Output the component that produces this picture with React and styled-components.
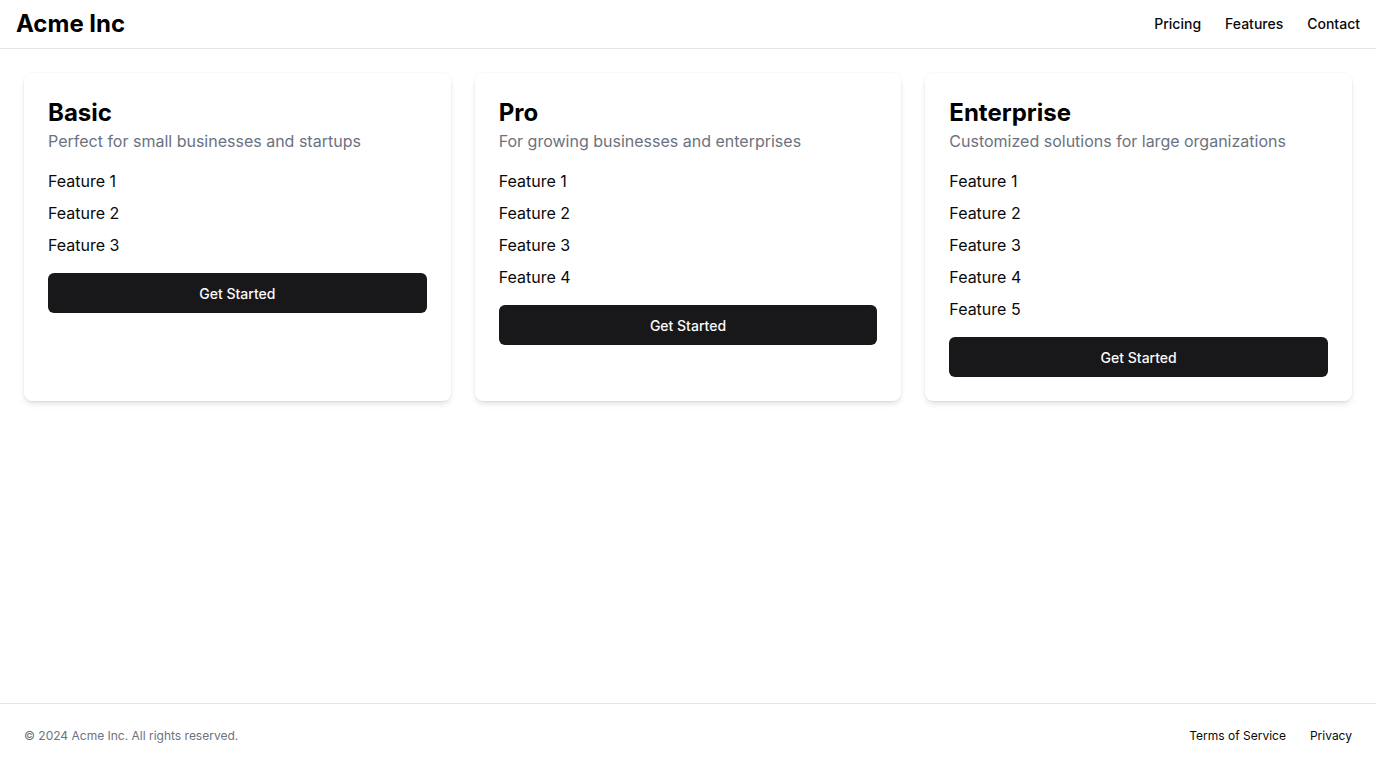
import styled, { createGlobalStyle } from "styled-components";

const plans = [
    { name: "Basic", blurb: "Perfect for small businesses and startups", features: 3 },
    { name: "Pro", blurb: "For growing businesses and enterprises", features: 4 },
    { name: "Enterprise", blurb: "Customized solutions for large organizations", features: 5 },
];

export default function App() {
    return (
        <Page>
            <GlobalStyle />
            <Header>
                <Logo>Acme Inc</Logo>
                <Nav>
                    <NavLink href="#">Pricing</NavLink>
                    <NavLink href="#">Features</NavLink>
                    <NavLink href="#">Contact</NavLink>
                </Nav>
            </Header>
            <Main>
                <Grid>
                    {plans.map(plan => (
                        <Card key={plan.name}>
                            <Title>{plan.name}</Title>
                            <Blurb>{plan.blurb}</Blurb>
                            <FeatureList>
                                {Array.from({ length: plan.features }, (_, i) => (
                                    <li key={i}>Feature {i + 1}</li>
                                ))}
                            </FeatureList>
                            <Button>Get Started</Button>
                        </Card>
                    ))}
                </Grid>
            </Main>
            <Footer>
                <Copyright>© 2024 Acme Inc. All rights reserved.</Copyright>
                <FooterNav>
                    <FooterLink href="#">Terms of Service</FooterLink>
                    <FooterLink href="#">Privacy</FooterLink>
                </FooterNav>
            </Footer>
        </Page>
    );
}

const GlobalStyle = createGlobalStyle`
    * {
        box-sizing: border-box;
    }
    body {
        margin: 0;
        background: #fff;
        color: #09090b;
        font-family: Inter, "Liberation Sans", sans-serif;
    }
`;

const Page = styled.div`
    display: flex;
    flex-direction: column;
    min-height: 100vh;
`;

const Header = styled.header`
    display: flex;
    align-items: center;
    justify-content: space-between;
    height: 49px;
    padding: 0 16px;
    border-bottom: 1px solid #e4e4e7;
`;

const Logo = styled.div`
    font-size: 24px;
    line-height: 32px;
    font-weight: 700;
    color: #000;
`;

const Nav = styled.nav`
    display: flex;
    gap: 24px;
`;

const NavLink = styled.a`
    font-size: 14px;
    line-height: 20px;
    font-weight: 500;
    color: #09090b;
    text-decoration: none;
`;

const Main = styled.main`
    flex: 1;
    padding: 24px;
`;

const Grid = styled.div`
    display: grid;
    grid-template-columns: repeat(3, 1fr);
    gap: 24px;
`;

const Card = styled.div`
    display: flex;
    flex-direction: column;
    padding: 24px;
    border-radius: 8px;
    background: #fff;
    box-shadow: 0 0 0 1px rgba(0, 0, 0, 0.02), 0 4px 6px -1px rgba(0, 0, 0, 0.1), 0 2px 4px -2px rgba(0, 0, 0, 0.08);
`;

const Title = styled.h2`
    margin: 0;
    font-size: 24px;
    line-height: 32px;
    font-weight: 700;
    color: #000;
`;

const Blurb = styled.p`
    margin: 0;
    font-size: 16px;
    line-height: 24px;
    color: #6b7280;
`;

const FeatureList = styled.ul`
    display: flex;
    flex-direction: column;
    gap: 8px;
    margin: 16px 0;
    padding: 0;
    list-style: none;
    font-size: 16px;
    line-height: 24px;
    color: #09090b;
`;

const Button = styled.button`
    height: 40px;
    border: none;
    border-radius: 6px;
    background: #18181b;
    color: #fafafa;
    font-family: inherit;
    font-size: 14px;
    font-weight: 500;
    cursor: pointer;
`;

const Footer = styled.footer`
    display: flex;
    align-items: center;
    justify-content: space-between;
    padding: 24px;
    border-top: 1px solid #e4e4e7;
`;

const Copyright = styled.p`
    margin: 0;
    font-size: 12px;
    line-height: 16px;
    color: #6b7280;
`;

const FooterNav = styled.nav`
    display: flex;
    gap: 24px;
`;

const FooterLink = styled.a`
    font-size: 12px;
    line-height: 16px;
    color: #09090b;
    text-decoration: none;
`;
